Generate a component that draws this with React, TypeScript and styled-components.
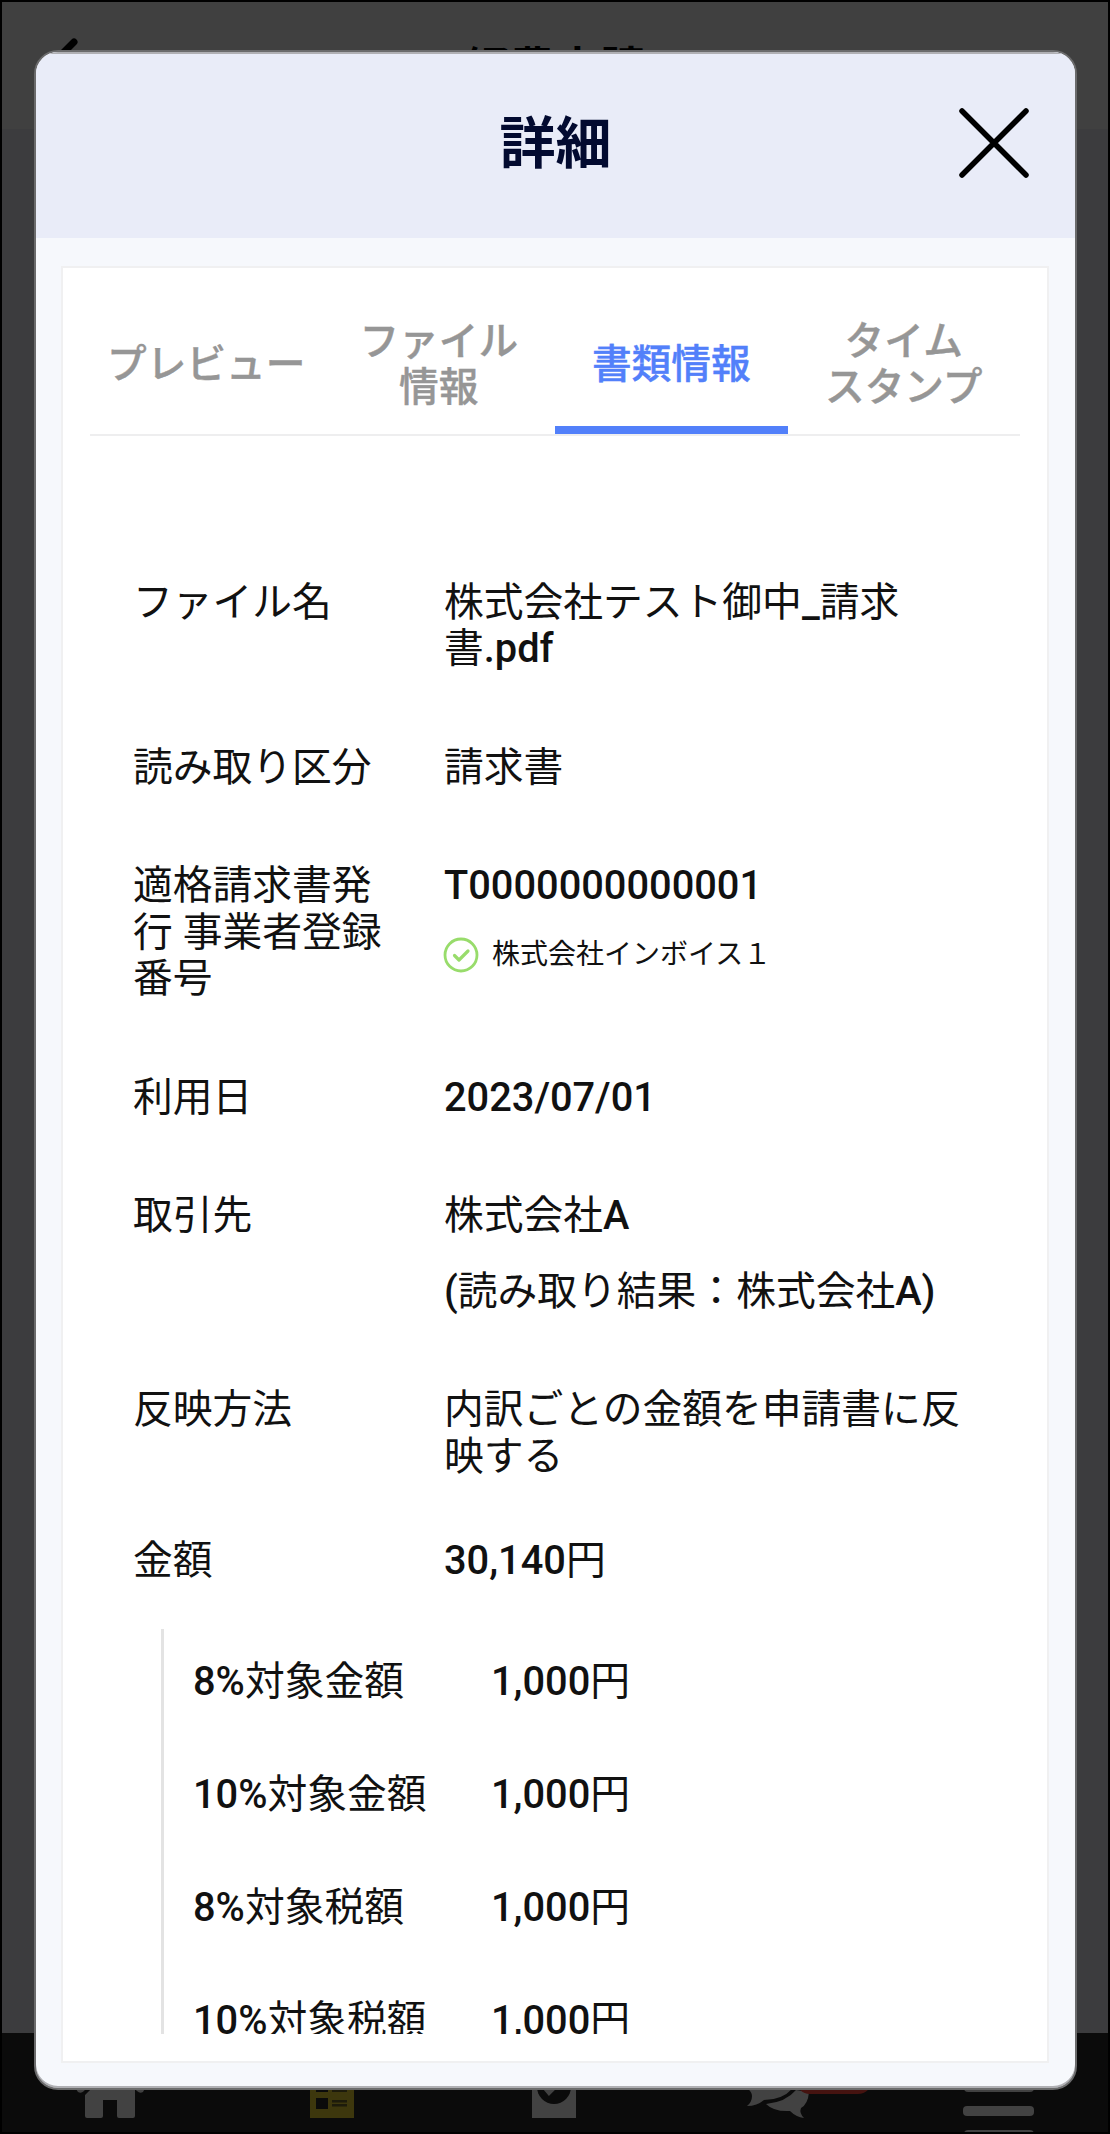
import React from "react";
import styled, { createGlobalStyle } from "styled-components";

const GlobalStyle = createGlobalStyle`
  * { box-sizing: border-box; }
  body { margin: 0; background: #000; }
`;

const Screen = styled.div`
  position: relative;
  display: flex;
  flex-direction: column;
  width: 1110px;
  height: 2134px;
  overflow: hidden;
  border: 2px solid #000;
  background: #3c3c3e;
  color: #111;
  font-family: Roboto, "Noto Sans CJK JP", sans-serif;
`;

const AppBar = styled.header`
  display: flex;
  align-items: flex-start;
  justify-content: center;
  flex: none;
  height: 127px;
  padding-top: 43px;
  background: #404040;
`;

const BackIcon = styled.svg`
  position: absolute;
  left: 40px;
  top: 32px;
`;

const AppTitle = styled.div`
  font-size: 45px;
  line-height: 50px;
  font-weight: 700;
  color: #000;
`;

const Spacer = styled.div`
  flex: 1;
`;

const TabBar = styled.nav`
  display: flex;
  flex: none;
  height: 99px;
  background: #0b0b0b;
`;

const Dialog = styled.section`
  position: absolute;
  left: 32px;
  top: 48px;
  width: 1043px;
  height: 2040px;
  display: flex;
  flex-direction: column;
  overflow: hidden;
  border: 2px solid #6b6b6c;
  border-radius: 24px;
  background: #f6f8fc;
  box-shadow: inset 0 -2px 0 #b0b0b4;
`;

const DialogHeader = styled.div`
  display: grid;
  grid-template-columns: 1fr auto 1fr;
  align-items: center;
  flex: none;
  height: 186px;
  padding-bottom: 4px;
  border-top: 2px solid #b0b0b4;
  background: #e9ecf8;
`;

const DialogTitle = styled.h1`
  grid-column: 2;
  margin: 0;
  font-size: 56px;
  line-height: 64px;
  font-weight: 700;
  color: #020a30;
`;

const CloseButton = styled.button`
  justify-self: end;
  display: flex;
  margin: 0 44px 2px 0;
  padding: 0;
  border: 0;
  background: none;
`;

const Panel = styled.div`
  display: flex;
  flex-direction: column;
  flex: 1;
  min-height: 0;
  margin: 28px 26px 25px 25px;
  padding: 0 27px 27px;
  border: 2px solid #f0f0f1;
  background: #fff;
`;

const Tabs = styled.div`
  display: grid;
  grid-template-columns: repeat(4, 1fr);
  flex: none;
  height: 168px;
  border-bottom: 2px solid #eeeeef;
`;

const Tab = styled.div<{ $active?: boolean }>`
  display: flex;
  align-items: center;
  justify-content: center;
  padding-top: 35px;
  border-bottom: 8px solid ${(p) => (p.$active ? "#5280fa" : "transparent")};
  font-size: 39.7px;
  line-height: 46px;
  font-weight: 500;
  -webkit-text-stroke: 0.4px currentColor;
  text-align: center;
  white-space: pre-line;
  color: ${(p) => (p.$active ? "#5280fa" : "#969696")};
`;

const Details = styled.div`
  display: flex;
  flex-direction: column;
  flex: 1;
  min-height: 0;
  overflow: hidden;
  padding: 143.5px 41px 0 43px;
  font-size: 39.78px;
  line-height: 46.6px;
`;

const Row = styled.div<{ $gap?: number }>`
  display: grid;
  grid-template-columns: 256px 530px;
  column-gap: 55px;
  flex: none;
  margin-bottom: ${(p) => p.$gap ?? 72}px;
`;

const Value = styled.div<{ $gap?: number }>`
  display: flex;
  flex-direction: column;
  gap: ${(p) => p.$gap ?? 29}px;
`;

const Latin = styled.span`
  font-weight: 500;
`;

const Issuer = styled.div`
  display: flex;
  align-items: center;
  gap: 13px;
  height: 40px;
  margin-left: -1px;
  font-size: 28px;
  line-height: 40px;
`;

const Breakdown = styled.div`
  flex: none;
  display: flex;
  flex-direction: column;
  gap: 66.4px;
  margin-left: 28px;
  padding: 30.6px 0 60px 29px;
  border-left: 3px solid #e3e3e3;
`;

const BreakdownRow = styled.div`
  display: grid;
  grid-template-columns: 298px 1fr;
`;

function Mixed({ text }: { text: string }) {
  return (
    <span>
      {text
        .split(/([!-~]+)/)
        .map((part, i) => (i % 2 ? <Latin key={i}>{part}</Latin> : part))}
    </span>
  );
}

function Field({ label, children, gap, valueGap }: { label: string; children: React.ReactNode; gap?: number; valueGap?: number }) {
  return (
    <Row $gap={gap}>
      <div>{label}</div>
      <Value $gap={valueGap}>{children}</Value>
    </Row>
  );
}

const tabs = [
  { label: "プレビュー" },
  { label: "ファイル\n情報" },
  { label: "書類情報", active: true },
  { label: "タイム\nスタンプ" },
];

const breakdown = ["8%対象金額", "10%対象金額", "8%対象税額", "10%対象税額"];

function NavIcons() {
  return (
    <svg width="1106" height="99" viewBox="2 2033 1106 99">
      <g fill="#424242">
        <path d="M110 2063 L135 2088 V2116 Q135 2118 133 2118 H119 Q117 2118 117 2116 V2100 H103 V2116 Q103 2118 101 2118 H87 Q85 2118 85 2116 V2095 L92 2088 Z" />
        <path d="M74 2086 L78 2092 Q81 2094 84 2091 L88 2086 Z M146 2086 L143 2092 Q140 2094 137 2091 L132 2086 Z" />
        <path d="M532 2070 H576 V2118 H532 Z" />
        <path d="M747 2088 Q752 2092 752 2096 Q752 2102 747 2106 Q757 2106 764 2100 Q782 2100 792 2089 V2086 Z" />
        <path d="M809 2092 Q808 2104 801 2108 Q799 2113 804 2118 Q796 2117 790 2111 Q774 2112 766 2104 Q786 2102 796 2090 Z" />
        <rect x="964" y="2081" width="70" height="11" rx="4" />
        <rect x="963" y="2106" width="71" height="10" rx="4" />
        <rect x="964" y="2130" width="70" height="10" rx="4" />
      </g>
      <circle cx="554" cy="2087" r="17" fill="#0b0b0b" />
      <path d="M543 2086 L549 2093 L558 2084" fill="none" stroke="#424242" strokeWidth="4" />
      <rect x="796" y="2060" width="76" height="34" rx="14" fill="#451310" />
      <path d="M310 2070 H354 V2118 H310 Z" fill="#3d370d" />
      <g fill="#0b0b0b">
        <rect x="316" y="2080" width="12" height="12" />
        <rect x="316" y="2098" width="12" height="11" />
      </g>
      <g fill="#1d1b0b">
        <rect x="332" y="2088" width="15" height="4" />
        <rect x="332" y="2100" width="15" height="2.5" />
        <rect x="332" y="2104" width="15" height="2.5" />
      </g>
    </svg>
  );
}

export default function App() {
  return (
    <>
      <GlobalStyle />
      <Screen>
        <AppBar>
          <BackIcon width="40" height="60" viewBox="0 0 40 60">
            <path d="M32 8 L8 32 L32 56" fill="none" stroke="#000" strokeWidth="7" strokeLinecap="round" />
          </BackIcon>
          <AppTitle>経費申請</AppTitle>
        </AppBar>
        <Spacer />
        <TabBar>
          <NavIcons />
        </TabBar>
        <Dialog>
          <DialogHeader>
            <DialogTitle>詳細</DialogTitle>
            <CloseButton aria-label="閉じる">
              <svg width="74" height="74" viewBox="0 0 74 74">
                <path d="M5 5 L69 69 M69 5 L5 69" fill="none" stroke="#000" strokeWidth="5.5" strokeLinecap="round" />
              </svg>
            </CloseButton>
          </DialogHeader>
          <Panel>
            <Tabs>
              {tabs.map((t) => (
                <Tab key={t.label} $active={t.active}>{t.label}</Tab>
              ))}
            </Tabs>
            <Details>
              <Field label="ファイル名"><Mixed text="株式会社テスト御中_請求書.pdf" /></Field>
              <Field label="読み取り区分"><Mixed text="請求書" /></Field>
              <Field label="適格請求書発行 事業者登録番号" valueGap={25} gap={71.5}>
                <Mixed text="T0000000000001" />
                <Issuer>
                  <svg width="36" height="36" viewBox="0 0 36 36" fill="none" stroke="#98dc6b" strokeLinecap="round" strokeLinejoin="round">
                    <circle cx="18" cy="18" r="16" strokeWidth="2.8" />
                    <path d="M11.5 18.5 L16 23 L25 14" strokeWidth="3.2" />
                  </svg>
                  株式会社インボイス１
                </Issuer>
              </Field>
              <Field label="利用日"><Mixed text="2023/07/01" /></Field>
              <Field label="取引先">
                <Mixed text="株式会社A" />
                <Mixed text="(読み取り結果：株式会社A)" />
              </Field>
              <Field label="反映方法" gap={57}><Mixed text="内訳ごとの金額を申請書に反映する" /></Field>
              <Field label="金額" gap={44.5}><Mixed text="30,140円" /></Field>
              <Breakdown>
                {breakdown.map((label) => (
                  <BreakdownRow key={label}>
                    <Mixed text={label} />
                    <Mixed text="1,000円" />
                  </BreakdownRow>
                ))}
              </Breakdown>
            </Details>
          </Panel>
        </Dialog>
      </Screen>
    </>
  );
}
